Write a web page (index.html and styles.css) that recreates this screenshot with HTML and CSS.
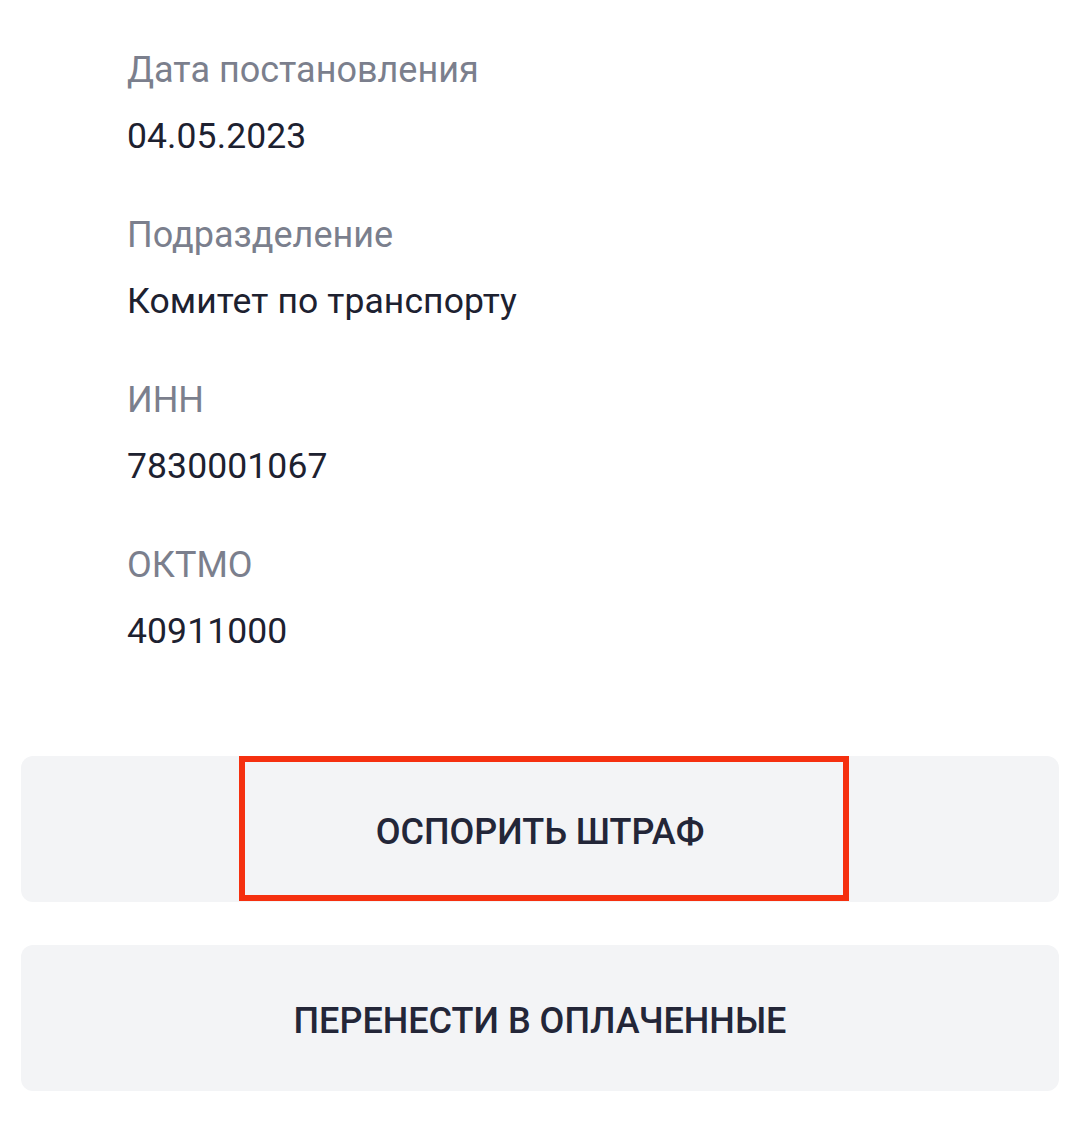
FILE: index.html
```html
<!DOCTYPE html>
<html lang="ru">
<head>
<meta charset="utf-8">
<link rel="stylesheet" href="styles.css">
</head>
<body>
<main class="page">
  <section class="fields">
    <div class="field">
      <div class="label">Дата постановления</div>
      <div class="value">04.05.2023</div>
    </div>
    <div class="field">
      <div class="label">Подразделение</div>
      <div class="value">Комитет по транспорту</div>
    </div>
    <div class="field">
      <div class="label">ИНН</div>
      <div class="value">7830001067</div>
    </div>
    <div class="field">
      <div class="label">ОКТМО</div>
      <div class="value">40911000</div>
    </div>
  </section>
  <section class="actions">
    <button class="btn">ОСПОРИТЬ ШТРАФ<span class="highlight"></span></button>
    <button class="btn">ПЕРЕНЕСТИ В ОПЛАЧЕННЫЕ</button>
  </section>
</main>
</body>
</html>
```
FILE: styles.css
```css
html, body {
  margin: 0;
  padding: 0;
  background: #ffffff;
}
body {
  font-family: Roboto, "Noto Sans", sans-serif;
  width: 1080px;
  height: 1136px;
  overflow: hidden;
}
.page {
  padding-top: 48px;
}
.fields {
  padding-left: 127px;
  display: flex;
  flex-direction: column;
  gap: 55px;
}
.field {
  display: flex;
  flex-direction: column;
  gap: 22px;
}
.label {
  font-size: 36px;
  line-height: 44px;
  color: #7b7f8d;
}
.value {
  font-size: 35.5px;
  line-height: 44px;
  letter-spacing: 0.1px;
  color: #1d2130;
}
.actions {
  margin-top: 103px;
  padding: 0 21px 0 21px;
  display: flex;
  flex-direction: column;
  gap: 43px;
}
.btn {
  position: relative;
  height: 146px;
  border: none;
  border-radius: 12px;
  background: #f3f4f6;
  font-family: Roboto, "Noto Sans", sans-serif;
  font-size: 36px;
  font-weight: 500;
  color: #232638;
  padding: 5px 0 0 0;
}
.highlight {
  position: absolute;
  left: 218px;
  top: 0;
  width: 610px;
  height: 145px;
  box-sizing: border-box;
  border: 6px solid #f5300f;
}
```
